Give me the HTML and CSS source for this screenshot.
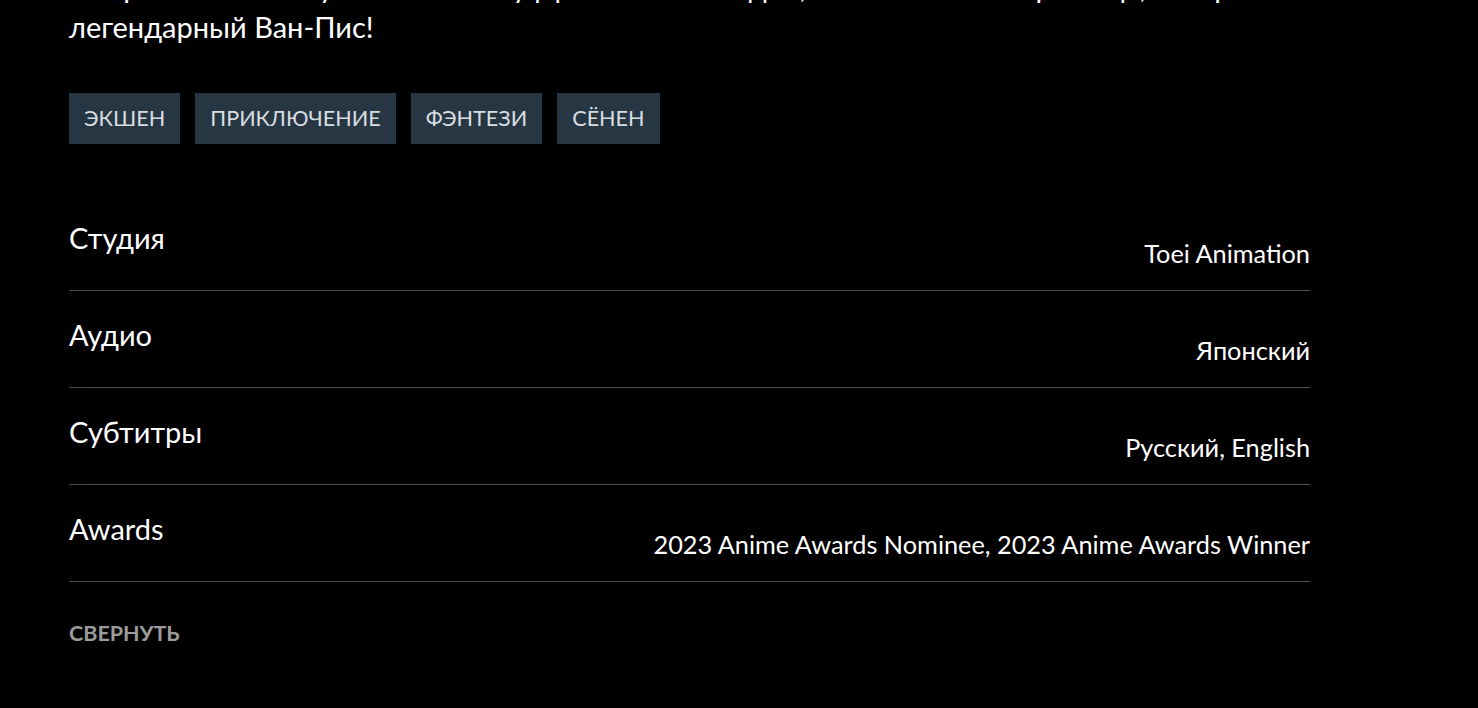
FILE: index.html
```html
<!DOCTYPE html>
<html lang="ru">
<head>
<meta charset="utf-8">
<title>Ван-Пис</title>
<link rel="stylesheet" href="styles.css">
</head>
<body>
<main class="details">
  <p class="synopsis">Отправляйтесь в путь вместе с Луффи и его командой, чтобы найти сокровище, которое называют</p>
  <p class="synopsis">легендарный Ван-Пис!</p>
  <ul class="tags">
    <li class="tag">Экшен</li>
    <li class="tag">Приключение</li>
    <li class="tag">Фэнтези</li>
    <li class="tag">Сёнен</li>
  </ul>
  <dl class="info">
    <div class="row"><dt class="label">Студия</dt><dd class="value">Toei Animation</dd></div>
    <div class="row"><dt class="label">Аудио</dt><dd class="value">Японский</dd></div>
    <div class="row"><dt class="label">Субтитры</dt><dd class="value">Русский, English</dd></div>
    <div class="row"><dt class="label">Awards</dt><dd class="value">2023 Anime Awards Nominee, 2023 Anime Awards Winner</dd></div>
  </dl>
  <button class="collapse">Свернуть</button>
</main>
</body>
</html>
```
FILE: styles.css
```css
* { box-sizing: border-box; }
html, body { margin: 0; padding: 0; background: #000; }
body { font-family: Lato, "Noto Sans", sans-serif; color: #fff; overflow: hidden; height: 708px; }
.details { width: 1241px; margin-left: 69px; margin-top: -33px; }
.synopsis { margin: 0; font-size: 29px; line-height: 40px; color: #fff; white-space: nowrap; }
.tags { list-style: none; margin: 46px 0 0; padding: 0; display: flex; gap: 15px; }
.tag { background: #263743; color: #d9dde0; font-size: 21.6px; line-height: 51px; height: 51px; padding: 0 15px; text-transform: uppercase; }
.info { margin: 50px 0 0; }
.row { display: flex; justify-content: space-between; padding: 28px 0 21px; border-bottom: 1px solid #4a4d55; }
.label { margin: 0; font-size: 29px; line-height: 32px; }
.value { margin: 15px 0 0; font-size: 25.3px; line-height: 32px; text-align: right; }
.collapse { display: block; margin-top: 38px; padding: 0; border: 0; background: none; font-family: Lato, sans-serif; font-weight: 700; font-size: 21.5px; color: #9b9b9b; text-transform: uppercase; }
```
